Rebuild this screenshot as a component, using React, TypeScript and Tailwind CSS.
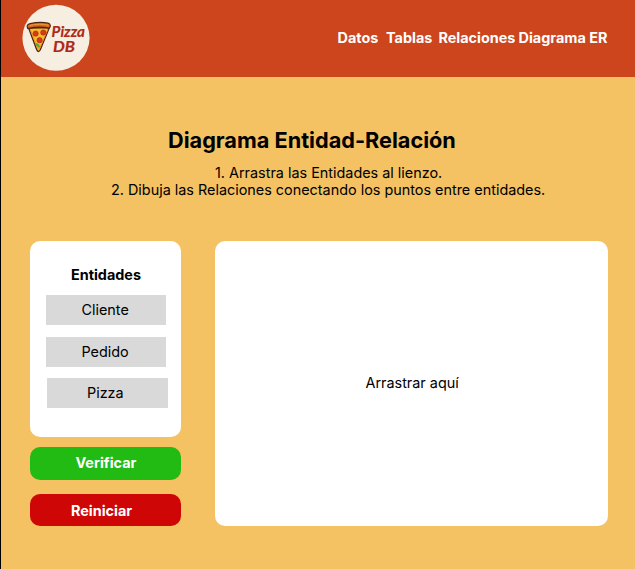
import React from "react";

function Logo() {
  return (
    <svg viewBox="0 0 68 68" className="mt-[4px] ml-[21px] h-[68px] w-[68px] shrink-0" role="img" aria-label="Pizza DB">
      <ellipse cx="34" cy="33.8" rx="33.6" ry="33" fill="#f6eee0" />
      <path d="M6.6 24 L14.6 45.6 Q16.2 49.2 18.2 46 L27.4 23.5Z" fill="#fcb92b" stroke="#4f2312" strokeWidth="1.3" strokeLinejoin="round" />
      <path d="M8.1 25.2 L16 45.5 M26 25 L17.2 45.5" stroke="#e88a20" strokeWidth="0.8" fill="none" />
      <path d="M5.8 24.6 C4.4 21.8 5.4 20.3 8.2 19.7 C14.6 18.2 21.5 18.2 26 19.2 C28.8 19.9 28.9 22.6 27.2 24.2 C21.5 22.9 13 23 5.8 24.6Z" fill="#d96b1e" stroke="#4f2312" strokeWidth="1.2" strokeLinejoin="round" />
      <path d="M8 21.4 C14 19.9 21 19.8 26 21" stroke="#f0963a" strokeWidth="1" fill="none" strokeLinecap="round" />
      <g fill="#d83a1b" stroke="#a92b17" strokeWidth="0.7">
        <circle cx="13.6" cy="29.6" r="2.6" />
        <circle cx="21.3" cy="28.5" r="2.6" />
        <circle cx="17.6" cy="36.2" r="2.6" />
      </g>
      <path d="M13.6 39.2 C16.4 38.8 18.2 41.2 17.8 43.8 C15.6 43.4 13.8 41.6 13.6 39.2Z" fill="#58a52d" />
      <g fill="#ae2818" stroke="#ae2818" strokeWidth="0.2" fontFamily="Lato, 'Open Sans', sans-serif" fontStyle="italic" fontWeight="700">
        <text x="29.6" y="33" fontSize="15.5" textLength="33.4" lengthAdjust="spacingAndGlyphs">Pizza</text>
        <text x="31" y="47.8" fontSize="16" textLength="22" lengthAdjust="spacingAndGlyphs">DB</text>
      </g>
    </svg>
  );
}

function Header() {
  return (
    <header className="flex h-[77px] items-start justify-between bg-[#cd451d]">
      <Logo />
      <nav className="mr-[26px] mt-[29px] flex text-[14.4px] leading-[17px] font-bold whitespace-nowrap text-white">
        <a className="w-[48.5px]">Datos</a>
        <a className="w-[52.5px]">Tablas</a>
        <a className="w-[80px]">Relaciones</a>
        <a className="w-[90.5px]">Diagrama ER</a>
      </nav>
    </header>
  );
}

function EntityPanel() {
  return (
    <section className="flex h-[196px] flex-col rounded-[10px] bg-white pl-[15.5px] pt-[25px] text-[14.4px] leading-[17px]">
      <h2 className="ml-[25.5px] font-bold">Entidades</h2>
      <div className="mt-[12px] h-[30px] w-[120.5px] bg-[#d9d9d9] pl-[36px] pt-[5.9px]">Cliente</div>
      <div className="mt-[11.5px] h-[30px] w-[120.5px] bg-[#d9d9d9] pl-[36px] pt-[6.4px]">Pedido</div>
      <div className="ml-[1.5px] mt-[11.5px] h-[30px] w-[121px] bg-[#d9d9d9] pl-[40px] pt-[5.9px]">Pizza</div>
    </section>
  );
}

export default function App() {
  return (
    <div className="h-[569px] w-[635px] overflow-hidden border-l border-black bg-[#f4c262] font-['Inter',sans-serif] text-black">
      <Header />
      <main>
        <div className="flex flex-col whitespace-nowrap">
          <h1 className="ml-[167px] mt-[50px] text-[21.7px] leading-[27px] font-bold">Diagrama Entidad-Relación</h1>
          <p className="ml-[214px] mt-[10px] text-[14.4px] leading-[17px]">1. Arrastra las Entidades al lienzo.</p>
          <p className="ml-[110px] text-[14.4px] leading-[17px]">2. Dibuja las Relaciones conectando los puntos entre entidades.</p>
        </div>
        <div className="mt-[43.4px] flex pl-[29px]">
          <aside className="flex w-[151px] flex-col text-[14.4px] leading-[17px]">
            <EntityPanel />
            <button className="mt-[9.5px] h-[33.5px] rounded-[10px] bg-[#22bb14] pb-[3px] pl-[45.5px] text-left font-bold text-white">Verificar</button>
            <button className="mt-[14px] h-[32px] rounded-[10px] bg-[#ce0606] pl-[41px] text-left font-bold text-white">Reiniciar</button>
          </aside>
          <section className="ml-[34px] h-[285px] w-[393px] rounded-[10px] bg-white pl-[150.5px] pt-[133px] text-[14.4px] leading-[17px]">
            Arrastrar aquí
          </section>
        </div>
      </main>
    </div>
  );
}
